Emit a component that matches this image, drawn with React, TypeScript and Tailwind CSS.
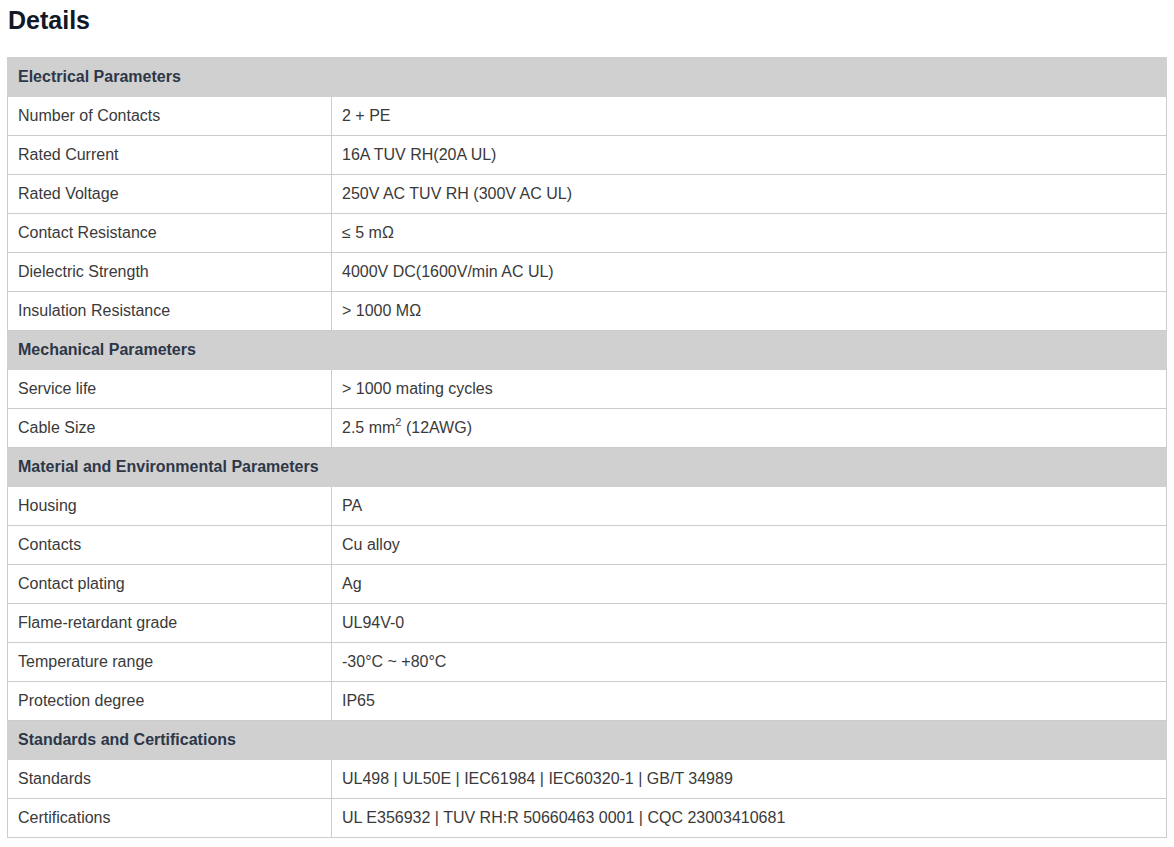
import React from "react";

type Row = { k: string; v: React.ReactNode } | { h: string };

const rows: Row[] = [
  { h: "Electrical Parameters" },
  { k: "Number of Contacts", v: "2 + PE" },
  { k: "Rated Current", v: "16A TUV RH(20A UL)" },
  { k: "Rated Voltage", v: "250V AC TUV RH (300V AC UL)" },
  { k: "Contact Resistance", v: "≤ 5 mΩ" },
  { k: "Dielectric Strength", v: "4000V DC(1600V/min AC UL)" },
  { k: "Insulation Resistance", v: "> 1000 MΩ" },
  { h: "Mechanical Parameters" },
  { k: "Service life", v: "> 1000 mating cycles" },
  {
    k: "Cable Size",
    v: (
      <>
        2.5 mm<sup className="text-[11px] relative -top-[7px]">2</sup> (12AWG)
      </>
    ),
  },
  { h: "Material and Environmental Parameters" },
  { k: "Housing", v: "PA" },
  { k: "Contacts", v: "Cu alloy" },
  { k: "Contact plating", v: "Ag" },
  { k: "Flame-retardant grade", v: "UL94V-0" },
  { k: "Temperature range", v: "-30°C ~ +80°C" },
  { k: "Protection degree", v: "IP65" },
  { h: "Standards and Certifications" },
  { k: "Standards", v: "UL498 | UL50E | IEC61984 | IEC60320-1 | GB/T 34989" },
  { k: "Certifications", v: "UL E356932 | TUV RH:R 50660463 0001 | CQC 23003410681" },
];

export default function App() {
  return (
    <div
      className="bg-white w-[1174px] min-h-[847px] pl-[7px] pt-[2px]"
      style={{ fontFamily: '"Liberation Sans", Arial, sans-serif' }}
    >
      <h2 className="text-[25px] leading-[36px] font-bold text-[#111827] pl-[1px]">Details</h2>
      <table className="mt-[19px] w-[1160px] border-collapse text-[16px] text-[#3a3a3a]">
        <tbody>
          {rows.map((r, i) =>
            "h" in r ? (
              <tr key={i} className="h-[39px]">
                <td
                  colSpan={2}
                  className="bg-[#d0d0d0] border border-[#d0d0d0] px-[10px] font-bold text-[#2d3748]"
                >
                  {r.h}
                </td>
              </tr>
            ) : (
              <tr key={i} className="h-[39px]">
                <td className="w-[324px] border border-[#cccccc] px-[10px]">{r.k}</td>
                <td className="border border-[#cccccc] px-[10px]">{r.v}</td>
              </tr>
            )
          )}
        </tbody>
      </table>
    </div>
  );
}
